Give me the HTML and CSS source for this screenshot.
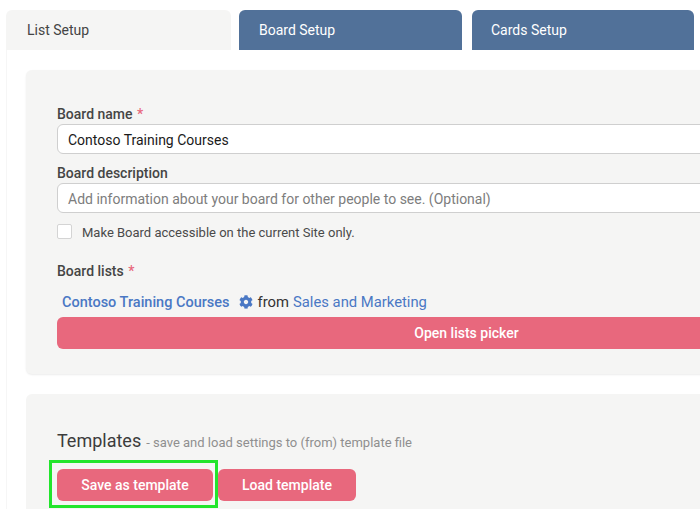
FILE: index.html
```html
<!DOCTYPE html>
<html lang="en">
<head>
    <meta charset="UTF-8" />
    <meta name="viewport" content="width=device-width, initial-scale=1.0" />
    <title>Board Setup</title>
    <link rel="stylesheet" href="styles.css">
</head>
<body>
    <div class="page">
      <!-- Tabs -->
      <div class="tabs">
        <div class="tab tab-active">List Setup</div>
        <div class="tab tab-board">Board Setup</div>
        <div class="tab tab-cards">Cards Setup</div>
      </div>

      <div class="tab-body">
        <div class="panel panel-board">
          <label class="field-label">Board name <span class="required">*</span></label>
          <div class="input input-value">Contoso Training Courses</div>

          <label class="field-label field-label-desc">Board description</label>
          <div class="input input-placeholder">Add information about your board for other people to see. (Optional)</div>

          <div class="check-row">
            <span class="checkbox"></span>
            <span class="check-text">Make Board accessible on the current Site only.</span>
          </div>

          <label class="field-label field-label-lists">Board lists <span class="required">*</span></label>
          <div class="list-row">
            <a class="list-name">Contoso Training Courses</a>
            <svg class="gear" viewBox="0 0 512 512"><path d="M487.4 315.7l-42.6-24.6c4.3-23.2 4.3-47 0-70.2l42.6-24.6c4.9-2.8 7.1-8.6 5.5-14-11.1-35.6-30-67.8-54.7-94.6-3.8-4.1-10-5.1-14.8-2.3L380.8 110c-17.9-15.4-38.5-27.3-60.8-35.1V25.8c0-5.6-3.9-10.5-9.4-11.7-36.7-8.2-74.3-7.8-109.2 0-5.5 1.2-9.4 6.1-9.4 11.7V75c-22.2 7.9-42.8 19.8-60.8 35.1L88.7 85.5c-4.9-2.8-11-1.9-14.8 2.3-24.7 26.7-43.6 58.9-54.7 94.6-1.7 5.4.6 11.2 5.5 14L67.3 221c-4.3 23.2-4.3 47 0 70.2l-42.6 24.6c-4.9 2.8-7.1 8.6-5.5 14 11.1 35.6 30 67.8 54.7 94.6 3.8 4.1 10 5.1 14.8 2.3l42.6-24.6c17.9 15.4 38.5 27.3 60.8 35.1v49.2c0 5.6 3.9 10.5 9.4 11.7 36.7 8.2 74.3 7.8 109.2 0 5.5-1.2 9.4-6.1 9.4-11.7v-49.2c22.2-7.9 42.8-19.8 60.8-35.1l42.6 24.6c4.9 2.8 11 1.9 14.8-2.3 24.7-26.7 43.6-58.9 54.7-94.6 1.5-5.5-.7-11.3-5.6-14.1zM256 336c-44.1 0-80-35.9-80-80s35.9-80 80-80 80 35.9 80 80-35.9 80-80 80z"/></svg>
            <span class="from">from</span>
            <a class="site-name">Sales and Marketing</a>
          </div>
          <button class="btn btn-wide">Open lists picker</button>
        </div>

        <div class="panel panel-templates">
          <div class="templates-title">
            <span class="templates-name">Templates</span>
            <span class="templates-note">- save and load settings to (from) template file</span>
          </div>
          <div class="btn-row">
            <button class="btn btn-save">Save as template</button>
            <button class="btn btn-load">Load template</button>
            <!-- Green highlight around the save button -->
            <div class="highlight"></div>
          </div>
        </div>
      </div>
    </div>
</body>
</html>
```

FILE: styles.css
```css
* {
  margin: 0;
  padding: 0;
  box-sizing: border-box;
}

html,
body {
  height: 100%;
  overflow: hidden;
}

body {
  font-family: Roboto, Arial, sans-serif;
  font-size: 14px;
  background-color: #ffffff;
  color: #333333;
}

.page {
  width: 920px;
  padding: 10px 0 0 6px;
}

/* Tabs */
.tabs {
  display: flex;
  height: 40px;
}

.tab {
  height: 40px;
  padding: 0 20px;
  line-height: 40px;
  font-size: 14px;
  border-radius: 6px 6px 0 0;
  background: #517199;
  color: #ffffff;
}

.tab-active {
  width: 225px;
  margin-right: 8px;
  padding-left: 21px;
  background: #f5f5f4;
  color: #444444;
}

.tab-board {
  width: 223px;
  margin-right: 10px;
}

.tab-cards {
  width: 222px;
  padding-left: 19px;
}

.tab-body {
  padding: 20px 14px 0 20px;
  box-shadow: inset 1px 0 0 #f6f6f6;
}

/* Panels */
.panel {
  background: #f5f5f4;
  border-radius: 6px;
  padding-left: 31px;
  padding-right: 30px;
}

.panel-board {
  height: 304px;
  padding-top: 35px;
  box-shadow: 0 1px 2px rgba(0, 0, 0, 0.08);
}

.panel-templates {
  height: 140px;
  margin-top: 20px;
  padding-top: 36px;
}

.field-label {
  display: block;
  height: 19px;
  line-height: 19px;
  font-weight: 500;
  font-size: 14px;
  color: #454545;
}

.field-label-desc {
  margin-top: 10px;
}

.field-label-lists {
  margin-top: 23px;
}

.required {
  color: #e8687d;
  margin-left: 1px;
}

.input {
  height: 30px;
  line-height: 30px;
  padding-left: 10px;
  background: #ffffff;
  border: 1px solid #cfcfcf;
  border-radius: 6px;
  font-size: 14px;
}

.input-value {
  color: #1a1a1a;
}

.input-placeholder {
  color: #7d7d7d;
}

.check-row {
  display: flex;
  align-items: center;
  gap: 10px;
  height: 15px;
  margin-top: 11px;
  font-size: 13px;
  color: #4a4a4a;
}

.check-text {
  padding-top: 2px;
}

.checkbox {
  width: 15px;
  height: 15px;
  background: #ffffff;
  border: 1px solid #d4d4d4;
  border-radius: 2px;
}

.list-row {
  display: flex;
  align-items: center;
  height: 20px;
  margin-top: 11px;
  padding-left: 5px;
  font-size: 14.8px;
}

.list-name {
  font-weight: 500;
  font-size: 14.5px;
  color: #4a78c4;
}

.gear {
  width: 14px;
  height: 14px;
  margin-left: 9px;
  fill: #4a78c4;
}

.from {
  margin-left: 5px;
  color: #333333;
}

.site-name {
  margin-left: 4px;
  color: #4a78c4;
}

.btn {
  display: block;
  height: 32px;
  border: none;
  border-radius: 6px;
  background: #e8687d;
  color: #ffffff;
  font-family: Roboto, Arial, sans-serif;
  font-size: 14px;
  font-weight: 500;
  cursor: pointer;
}

.btn-wide {
  width: 100%;
  margin-top: 5px;
}

/* Templates */
.templates-title {
  display: flex;
  align-items: baseline;
  gap: 5px;
  height: 24px;
}

.templates-name {
  font-size: 18px;
  color: #3c3c3c;
}

.templates-note {
  font-size: 13px;
  color: #8f8f8f;
}

.btn-row {
  position: relative;
  display: flex;
  gap: 5px;
  margin-top: 15px;
}

.btn-save {
  width: 156px;
}

.btn-load {
  width: 138px;
}

.highlight {
  position: absolute;
  left: -8px;
  top: -9px;
  width: 169px;
  height: 48px;
  border: 3px solid #22e52c;
}
```
